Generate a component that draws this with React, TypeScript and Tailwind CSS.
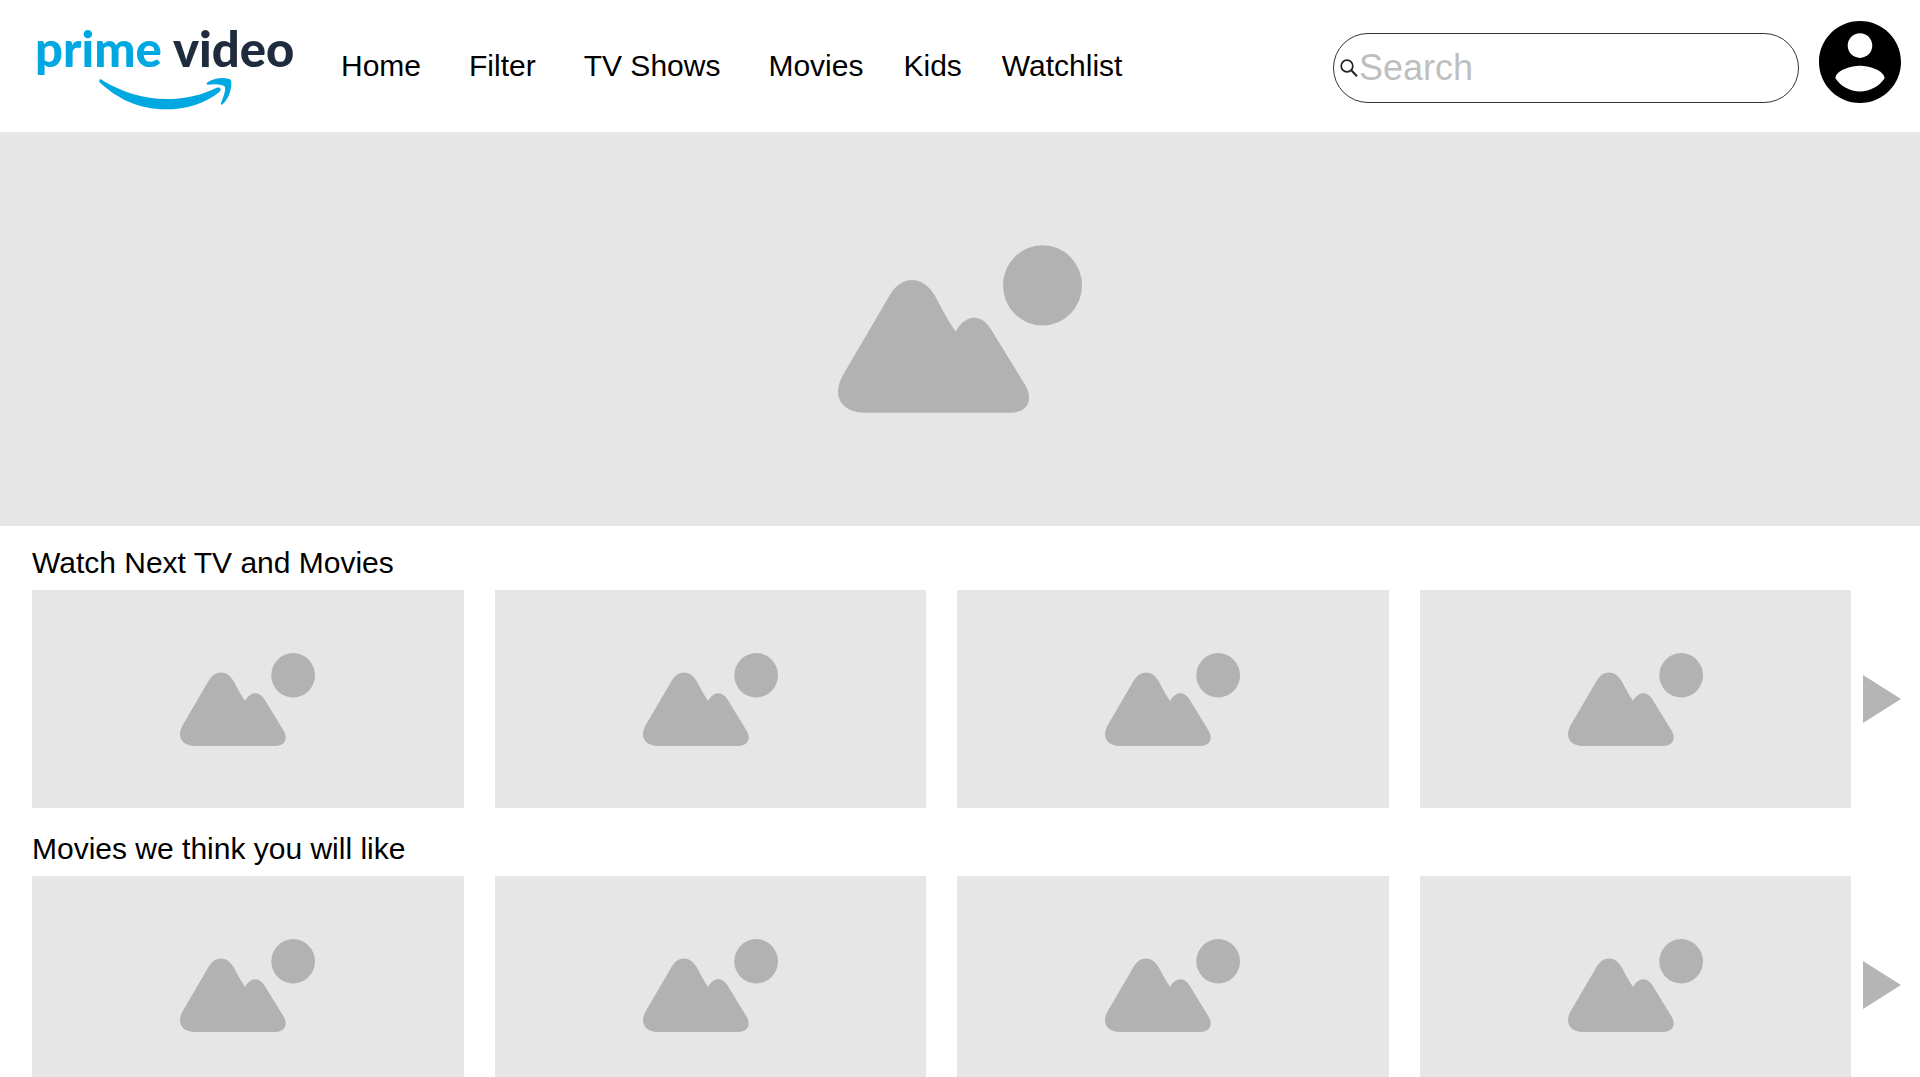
const navGroups = [
  { gap: "gap-12", links: ["Home", "Filter", "TV Shows", "Movies"] },
  { gap: "gap-10", links: ["Kids", "Watchlist"] },
];

const rows = ["Watch Next TV and Movies", "Movies we think you will like"];

const Logo = () => (
  <svg viewBox="0 0 264 92" className="w-[264px] h-[92px] shrink-0 overflow-visible" role="img" aria-label="prime video">
    <g className="font-['Lato',sans-serif] text-[49px] font-black">
      <text x="3" y="46" fill="#00a8e1">prime</text>
      <text x="141" y="46" fill="#1f2c3d">video</text>
    </g>
    <g fill="#00a8e1" transform="scale(0.3333) translate(-96 -63)">
      <path d="M298 240C300 236 305 239 309 242C370 277 430 297 500 297C560 297 606 284 650 263C660 260 666 267 659 275C615 311 560 328 497 328C415 328 350 295 298 246Z" />
      <path d="M622 254C618 252 620 249 624 246C645 233 670 232 688 237C693 239 694 243 694 250C694 275 684 297 668 313C664 316 661 314 663 310C670 292 677 274 675 262C673 252 645 251 622 254Z" />
    </g>
  </svg>
);

const Placeholder = ({ className }: { className: string }) => (
  <svg viewBox="54 45 732 503" className={className} fill="#b2b2b2" aria-hidden="true">
    <path d="M207 199C242 133 310 133 346 199C368 241 385 272 407 304C435 252 483 250 510 293L617 467C640 510 624 547 570 548H135C65 547 36 500 66 440Z" />
    <ellipse cx="667.5" cy="165.5" rx="118.5" ry="120.5" />
  </svg>
);

const Header = () => (
  <header className="flex items-start pt-[21px] pb-[19px] pl-8 pr-[19px]">
    <a href="#home">
      <Logo />
    </a>
    <nav className="flex gap-10 ml-[45px] mt-[27px] text-[30px] leading-9 whitespace-nowrap">
      {navGroups.map((group) => (
        <ul key={group.links[0]} className={`flex ${group.gap}`}>
          {group.links.map((link) => (
            <li key={link}>
              <a href="#">{link}</a>
            </li>
          ))}
        </ul>
      ))}
    </nav>
    <label className="flex items-center gap-px w-[466px] h-[70px] ml-auto mt-3 pl-1.5 pr-8 border border-[#333333] rounded-full">
      <svg viewBox="0 0 18 18" className="w-[18px] h-[18px] shrink-0" fill="none" stroke="#222222" aria-hidden="true">
        <circle cx="7" cy="7" r="5.8" strokeWidth="1.7" />
        <path d="M11 11L17 17.2" strokeWidth="2" />
      </svg>
      <input
        type="search"
        aria-label="Search"
        placeholder="Search"
        className="flex-1 min-w-0 text-[36px] leading-11 outline-none placeholder:text-[#bfbfbf]"
      />
    </label>
    <button type="button" aria-label="Account" className="ml-5 shrink-0">
      <svg viewBox="2 2 20 20" className="w-[82px] h-[82px]" aria-hidden="true">
        <path d="M12 2C6.48 2 2 6.48 2 12s4.48 10 10 10 10-4.48 10-10S17.52 2 12 2zm0 3c1.66 0 3 1.34 3 3s-1.34 3-3 3-3-1.34-3-3 1.34-3 3-3zm0 14.2c-2.5 0-4.71-1.28-6-3.22.03-1.99 4-3.08 6-3.08 1.99 0 5.97 1.09 6 3.08-1.29 1.94-3.5 3.22-6 3.22z" />
      </svg>
    </button>
  </header>
);

const Row = ({ title }: { title: string }) => (
  <section>
    <h2 className="text-[30px] leading-9 mb-[9px]">{title}</h2>
    <div className="flex items-center gap-3">
      <div className="grid grid-cols-4 gap-[31px] flex-1">
        {[1, 2, 3, 4].map((card) => (
          <div key={card} className="flex items-center justify-center h-[218px] bg-[#e6e6e6]">
            <Placeholder className="w-[135px] h-[93px]" />
          </div>
        ))}
      </div>
      <button type="button" aria-label={`More from ${title}`} className="shrink-0">
        <svg viewBox="0 0 38 48" className="w-[38px] h-12" fill="#b5b5b5" aria-hidden="true">
          <path d="M0 0L38 24L0 48Z" />
        </svg>
      </button>
    </div>
  </section>
);

const App = () => {
  return (
    <div className="min-h-screen bg-white text-black font-['Liberation_Sans',Arial,sans-serif]">
      <Header />
      <div className="flex items-center justify-center h-[394px] bg-[#e6e6e6]">
        <Placeholder className="w-[244px] h-[168px]" />
      </div>
      <main className="flex flex-col gap-[23px] pt-[19px] pl-8 pr-[19px]">
        {rows.map((title) => (
          <Row key={title} title={title} />
        ))}
      </main>
    </div>
  );
};

export default App;
